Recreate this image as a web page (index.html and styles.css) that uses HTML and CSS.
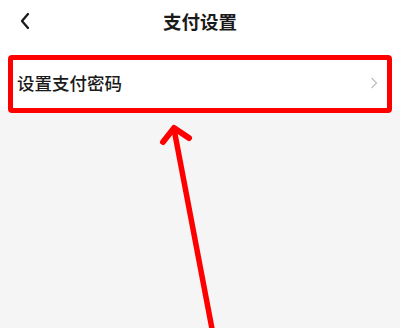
FILE: index.html
```html
<!DOCTYPE html>
<html lang="zh-CN">
<head>
<meta charset="utf-8">
<link rel="stylesheet" href="styles.css">
</head>
<body>
<div class="page">
  <div class="top">
    <header class="nav">
      <svg class="back" width="12" height="18" viewBox="0 0 12 18"><polyline points="9,2 3,9 9,16" fill="none" stroke="#1a1a1a" stroke-width="2.3" stroke-linecap="round" stroke-linejoin="round"/></svg>
      <h1 class="title">支付设置</h1>
    </header>
    <div class="row">
      <span class="row-label">设置支付密码</span>
      <svg class="chev" width="8" height="12" viewBox="0 0 8 12"><polyline points="1.5,1 6.5,6 1.5,11" fill="none" stroke="#bdbdbd" stroke-width="1.2"/></svg>
    </div>
  </div>
  <div class="highlight"></div>
  <svg class="arrow" width="400" height="328" viewBox="0 0 400 328">
    <g fill="none" stroke="#ff0000" stroke-linecap="round" stroke-linejoin="round">
      <line x1="174" y1="129" x2="213" y2="334" stroke-width="5.5"/>
      <polyline points="163,142 174,128 189,138" stroke-width="6"/>
    </g>
  </svg>
</div>
</body>
</html>
```
FILE: styles.css
```css
html, body {
  margin: 0;
  padding: 0;
}
body {
  width: 400px;
  height: 328px;
  overflow: hidden;
  background: #f5f5f5;
  font-family: "Noto Sans CJK SC", "Noto Sans", sans-serif;
  color: #1a1a1a;
}
.page {
  position: relative;
  width: 400px;
  height: 328px;
}
.top {
  background: #ffffff;
  padding-bottom: 0;
}
.nav {
  height: 44px;
  display: flex;
  align-items: center;
  justify-content: center;
  position: relative;
}
.back {
  position: absolute;
  left: 19px;
  top: 12px;
}
.title {
  margin: 0;
  font-size: 18.5px;
  font-weight: 700;
  line-height: 1;
  margin-top: -2px;
}
.row {
  margin-top: 12px;
  height: 54px;
  display: flex;
  align-items: center;
  justify-content: space-between;
  padding: 0 22px 0 17px;
}
.row-label {
  font-size: 17.5px;
  font-weight: 500;
  line-height: 1;
  margin-top: -1px;
}
.chev {
  margin-top: 0;
}
.highlight {
  position: absolute;
  left: 8px;
  top: 55px;
  width: 384px;
  height: 58px;
  box-sizing: border-box;
  border: 5.5px solid #ff0000;
  border-radius: 4px;
}
.arrow {
  position: absolute;
  left: 0;
  top: 0;
}
```
